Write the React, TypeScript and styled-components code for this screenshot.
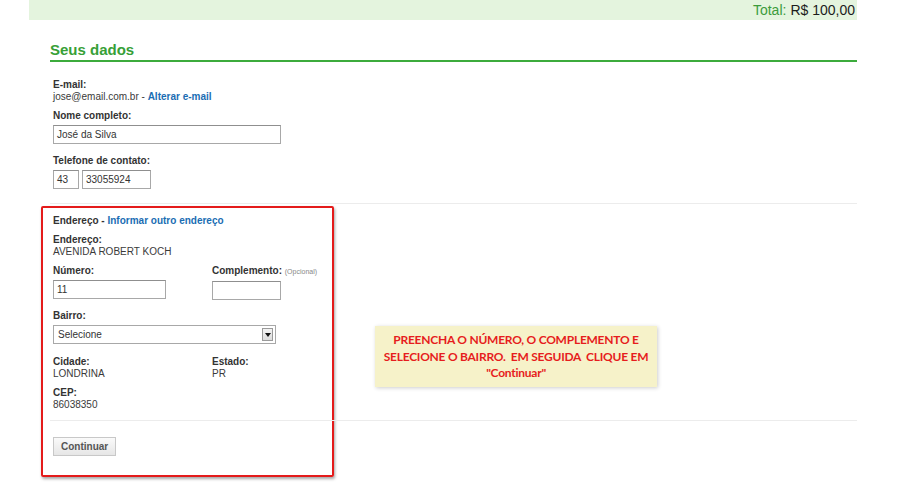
import styled, { createGlobalStyle } from 'styled-components'

const GlobalStyle = createGlobalStyle`
    body {
        margin: 0;
        background: #ffffff;
        font-family: "Liberation Sans", Arial, sans-serif;
        color: #333;
    }
`

const Page = styled.div`
    margin-left: 29px;
    width: 828px;
`

const TotalBar = styled.div`
    height: 20px;
    background: #e4f4de;
    display: flex;
    align-items: center;
    justify-content: flex-end;
    padding-right: 2px;
    font-size: 14px;
`

const TotalLabel = styled.span`
    color: #3c9c3c;
    margin-right: 4px;
`

const TotalValue = styled.span`
    color: #1c1c1c;
`

const Content = styled.div`
    padding-left: 21px;
`

const Heading = styled.h2`
    margin: 21px 0 0;
    height: 18px;
    line-height: 18px;
    font-size: 15px;
    font-weight: bold;
    color: #37a037;
    border-bottom: 2px solid #3cab3c;
    padding-bottom: 1px;
`

const Section = styled.div<{ $top: number; $bottom: number }>`
    position: relative;
    padding: ${p => p.$top}px 0 ${p => p.$bottom}px 3px;
`

const BorderedSection = styled(Section)`
    border-top: 1px solid #ececec;
`

const Field = styled.div<{ $gap?: number }>`
    margin-top: ${p => p.$gap ?? 0}px;
`

const Label = styled.div`
    font-size: 10px;
    line-height: 12px;
    font-weight: bold;
    color: #333;
`

const Hint = styled.span`
    font-size: 7px;
    font-weight: normal;
    color: #888;
`

const Value = styled.div`
    font-size: 10px;
    line-height: 12px;
    color: #3a3a3a;
`

const Link = styled.a`
    color: #1a6db3;
    font-weight: bold;
    text-decoration: none;
`

const Input = styled.div<{ $w: number }>`
    width: ${p => p.$w}px;
    height: 19px;
    box-sizing: border-box;
    border: 1px solid #a8a8a8;
    border-top-color: #8f8f8f;
    font-size: 10px;
    line-height: 17px;
    padding-left: 3px;
    color: #333;
    background: #fff;
`

const InputRow = styled.div<{ $gap: number }>`
    display: flex;
    gap: ${p => p.$gap}px;
    margin-top: 3px;
`

const Columns = styled.div`
    display: flex;
`

const Col = styled.div<{ $w: number }>`
    width: ${p => p.$w}px;
`

const Select = styled.div`
    margin-top: 3px;
    width: 223px;
    height: 19px;
    box-sizing: border-box;
    border: 1px solid #a8a8a8;
    display: flex;
    align-items: center;
    justify-content: space-between;
    padding: 0 2px 0 4px;
    font-size: 10px;
    color: #333;
`

const Arrow = styled.div`
    width: 11px;
    height: 13px;
    box-sizing: border-box;
    border: 1px solid #9a9a9a;
    background: linear-gradient(#f4f4f4, #dcdcdc);
    display: flex;
    align-items: center;
    justify-content: center;
    &::after {
        content: '';
        border-left: 3px solid transparent;
        border-right: 3px solid transparent;
        border-top: 4px solid #111;
    }
`

const Button = styled.div`
    display: inline-block;
    height: 19px;
    box-sizing: border-box;
    padding: 0 7px;
    border: 1px solid #c8c8c8;
    background: linear-gradient(#fafafa, #e6e6e6);
    font-size: 10px;
    line-height: 17px;
    font-weight: bold;
    color: #555;
`

const Highlight = styled.div`
    position: absolute;
    left: -9px;
    top: 2px;
    width: 293px;
    height: 271px;
    box-sizing: border-box;
    border: 2px solid #e41b1b;
    border-radius: 2px;
    box-shadow: 1px 2px 3px rgba(0, 0, 0, 0.35);
    pointer-events: none;
`

const Note = styled.div`
    position: absolute;
    left: 325px;
    top: 122px;
    width: 282px;
    height: 61px;
    box-sizing: border-box;
    padding-top: 6px;
    background: #f6f2c9;
    box-shadow: 1px 1px 4px rgba(0, 0, 0, 0.2);
    text-align: center;
    font-family: Lato, "Open Sans", sans-serif;
    font-weight: bold;
    font-size: 12px;
    letter-spacing: -0.25px;
    line-height: 16.5px;
    color: #e61d1d;
`

export default function App() {
    return (
        <>
            <GlobalStyle />
            <Page>
                <TotalBar>
                    <TotalLabel>Total:</TotalLabel>
                    <TotalValue>R$ 100,00</TotalValue>
                </TotalBar>
                <Content>
                    <Heading>Seus dados</Heading>
                    <Section $top={17} $bottom={14}>
                        <Field>
                            <Label>E-mail:</Label>
                            <Value>jose@email.com.br - <Link>Alterar e-mail</Link></Value>
                        </Field>
                        <Field $gap={7}>
                            <Label>Nome completo:</Label>
                            <InputRow $gap={0}>
                                <Input $w={228}>José da Silva</Input>
                            </InputRow>
                        </Field>
                        <Field $gap={11}>
                            <Label>Telefone de contato:</Label>
                            <InputRow $gap={3}>
                                <Input $w={26}>43</Input>
                                <Input $w={69}>33055924</Input>
                            </InputRow>
                        </Field>
                    </Section>
                    <BorderedSection $top={11} $bottom={9}>
                        <Highlight />
                        <Note>
                            PREENCHA O NÚMERO, O COMPLEMENTO E<br />
                            SELECIONE O BAIRRO.&nbsp; EM SEGUIDA&nbsp; CLIQUE EM<br />
                            "Continuar"
                        </Note>
                        <Label>Endereço - <Link>Informar outro endereço</Link></Label>
                        <Field $gap={7}>
                            <Label>Endereço:</Label>
                            <Value>AVENIDA ROBERT KOCH</Value>
                        </Field>
                        <Columns>
                            <Col $w={159}>
                                <Field $gap={7}>
                                    <Label>Número:</Label>
                                    <InputRow $gap={0}>
                                        <Input $w={113}>11</Input>
                                    </InputRow>
                                </Field>
                            </Col>
                            <Col $w={140}>
                                <Field $gap={7}>
                                    <Label>Complemento: <Hint>(Opcional)</Hint></Label>
                                    <InputRow $gap={0}>
                                        <Input $w={69} />
                                    </InputRow>
                                </Field>
                            </Col>
                        </Columns>
                        <Field $gap={10}>
                            <Label>Bairro:</Label>
                            <Select>
                                Selecione
                                <Arrow />
                            </Select>
                        </Field>
                        <Columns>
                            <Col $w={159}>
                                <Field $gap={12}>
                                    <Label>Cidade:</Label>
                                    <Value>LONDRINA</Value>
                                </Field>
                            </Col>
                            <Col $w={140}>
                                <Field $gap={12}>
                                    <Label>Estado:</Label>
                                    <Value>PR</Value>
                                </Field>
                            </Col>
                        </Columns>
                        <Field $gap={7}>
                            <Label>CEP:</Label>
                            <Value>86038350</Value>
                        </Field>
                    </BorderedSection>
                    <BorderedSection $top={15} $bottom={30}>
                        <Button>Continuar</Button>
                    </BorderedSection>
                </Content>
            </Page>
        </>
    )
}
